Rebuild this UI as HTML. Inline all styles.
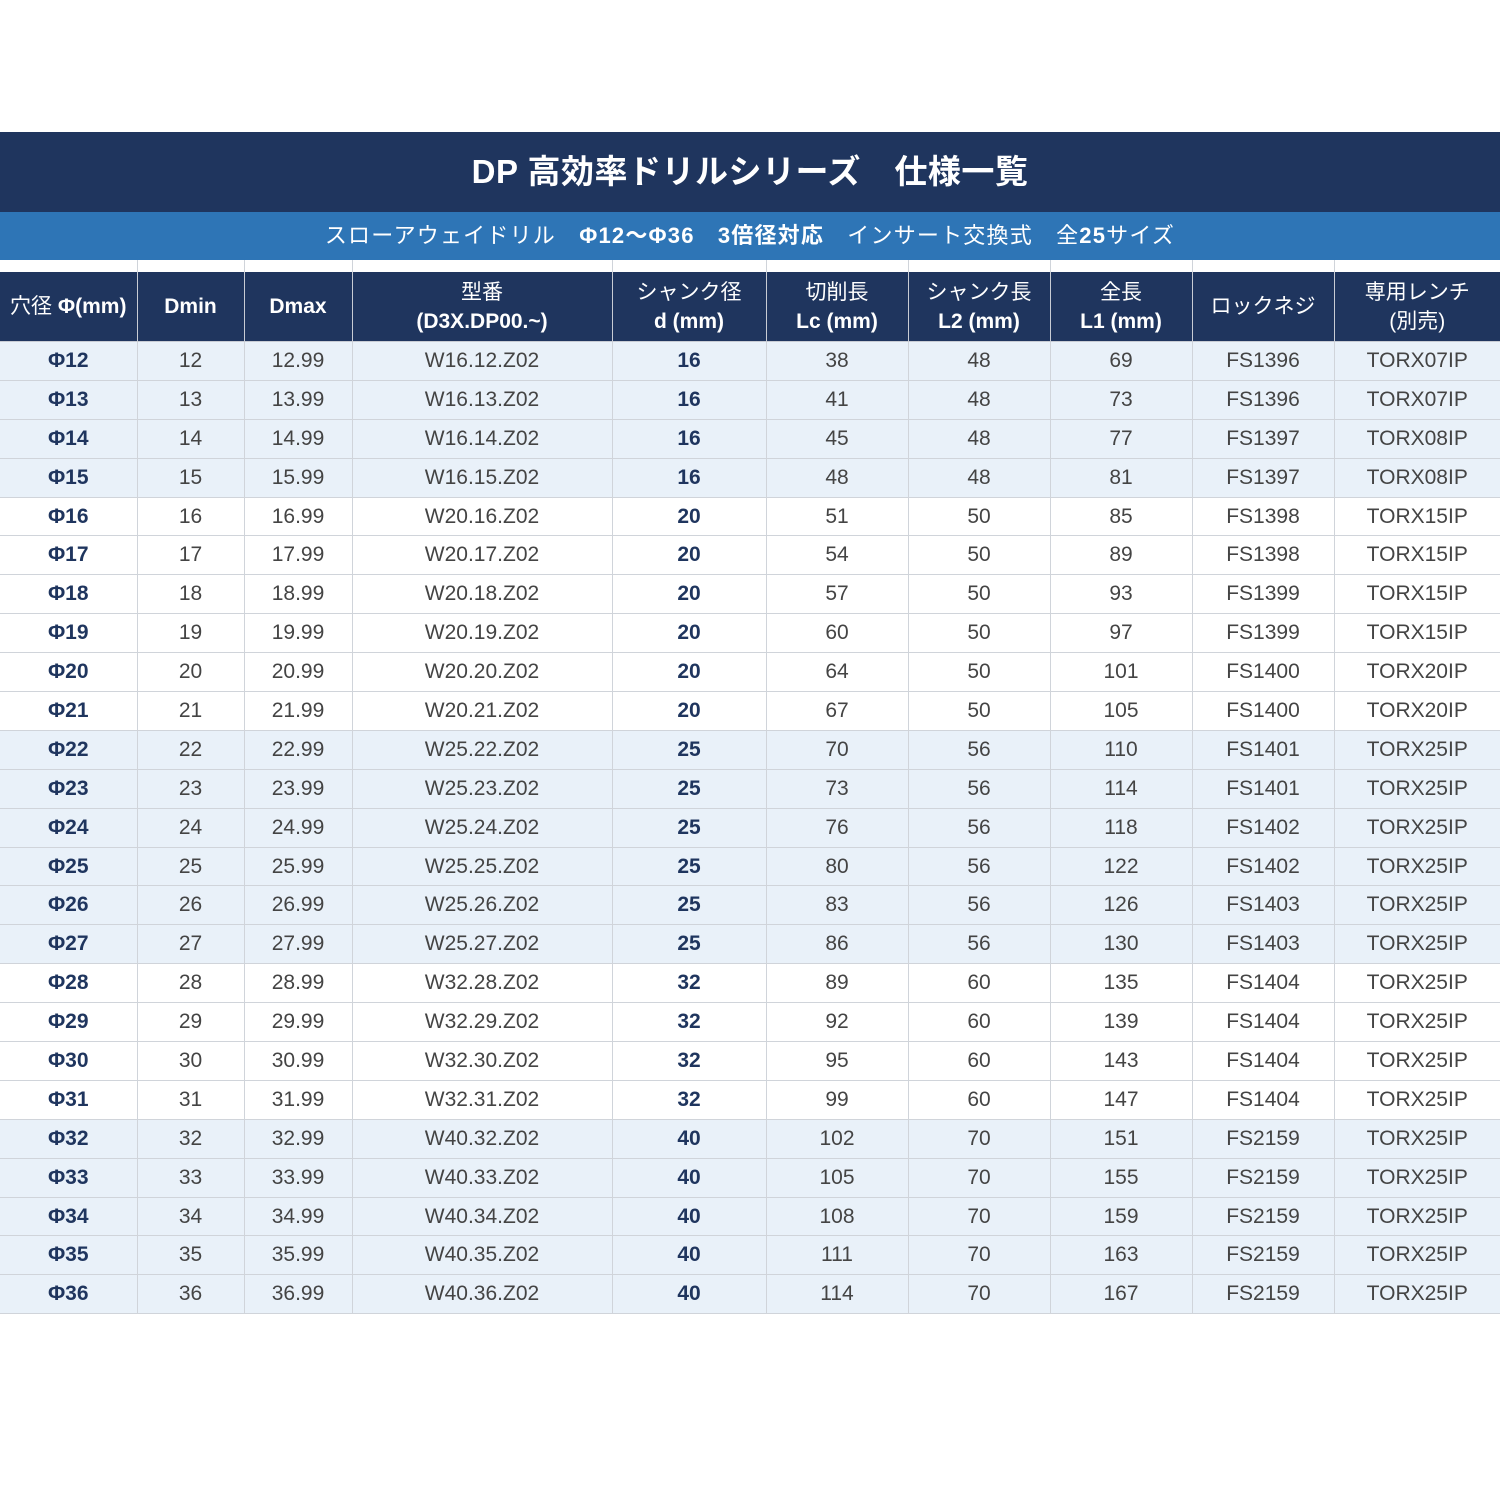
<!DOCTYPE html>
<html><head><meta charset="utf-8"><style>
body{margin:0;width:1500px;height:1500px;background:#fff;font-family:"Liberation Sans","Noto Sans CJK JP",sans-serif;position:relative;overflow:hidden}
.t1{position:absolute;top:132px;left:0;width:1500px;height:80px;background:#1f355e;color:#fff;font-size:33px;font-weight:bold;text-align:center;line-height:80px;letter-spacing:0.5px}
.t2{position:absolute;top:212px;left:0;width:1500px;height:48px;background:#2e75b6;color:#fff;font-size:22px;text-align:center;line-height:48px;letter-spacing:1.2px}
table{position:absolute;top:260px;left:0;width:1500px;border-collapse:collapse;table-layout:fixed}
td{border-left:1px solid #d0d4da;border-bottom:1px solid #d0d4da;text-align:center;color:#444;font-size:21px;padding:0;height:37.9px}
td:first-child{border-left:none}
tr.sp td{height:12px;border-bottom:none}
tr.h td{background:#1f355e;color:#fff;font-weight:bold;height:69px;font-size:21px;line-height:29px;border-color:#c8ccd4}
.h .n{font-weight:normal}
td.b{font-weight:bold;color:#1f355e}
tr.a td{background:#e9f1f9}
</style></head><body>
<div class="t1">DP 高効率ドリルシリーズ　仕様一覧</div>
<div class="t2">スローアウェイドリル　<b>Φ12～Φ36　3倍径対応</b>　インサート交換式　全<b>25</b>サイズ</div>
<table>
<colgroup><col style="width:137px"><col style="width:107px"><col style="width:108px"><col style="width:260px"><col style="width:154px"><col style="width:142px"><col style="width:142px"><col style="width:142px"><col style="width:142px"><col style="width:166px"></colgroup>
<tr class="sp"><td></td><td></td><td></td><td></td><td></td><td></td><td></td><td></td><td></td><td></td></tr>
<tr class="h"><td style="white-space:nowrap"><span class="n">穴径</span> Φ(mm)</td><td>Dmin</td><td>Dmax</td><td><span class="n">型番</span><br>(D3X.DP00.~)</td><td><span class="n">シャンク径</span><br>d (mm)</td><td><span class="n">切削長</span><br>Lc (mm)</td><td><span class="n">シャンク長</span><br>L2 (mm)</td><td><span class="n">全長</span><br>L1 (mm)</td><td><span class="n">ロックネジ</span></td><td><span class="n">専用レンチ<br>(別売)</span></td></tr>
<tr class="a"><td class="b">Φ12</td><td>12</td><td>12.99</td><td>W16.12.Z02</td><td class="b">16</td><td>38</td><td>48</td><td>69</td><td>FS1396</td><td>TORX07IP</td></tr>
<tr class="a"><td class="b">Φ13</td><td>13</td><td>13.99</td><td>W16.13.Z02</td><td class="b">16</td><td>41</td><td>48</td><td>73</td><td>FS1396</td><td>TORX07IP</td></tr>
<tr class="a"><td class="b">Φ14</td><td>14</td><td>14.99</td><td>W16.14.Z02</td><td class="b">16</td><td>45</td><td>48</td><td>77</td><td>FS1397</td><td>TORX08IP</td></tr>
<tr class="a"><td class="b">Φ15</td><td>15</td><td>15.99</td><td>W16.15.Z02</td><td class="b">16</td><td>48</td><td>48</td><td>81</td><td>FS1397</td><td>TORX08IP</td></tr>
<tr><td class="b">Φ16</td><td>16</td><td>16.99</td><td>W20.16.Z02</td><td class="b">20</td><td>51</td><td>50</td><td>85</td><td>FS1398</td><td>TORX15IP</td></tr>
<tr><td class="b">Φ17</td><td>17</td><td>17.99</td><td>W20.17.Z02</td><td class="b">20</td><td>54</td><td>50</td><td>89</td><td>FS1398</td><td>TORX15IP</td></tr>
<tr><td class="b">Φ18</td><td>18</td><td>18.99</td><td>W20.18.Z02</td><td class="b">20</td><td>57</td><td>50</td><td>93</td><td>FS1399</td><td>TORX15IP</td></tr>
<tr><td class="b">Φ19</td><td>19</td><td>19.99</td><td>W20.19.Z02</td><td class="b">20</td><td>60</td><td>50</td><td>97</td><td>FS1399</td><td>TORX15IP</td></tr>
<tr><td class="b">Φ20</td><td>20</td><td>20.99</td><td>W20.20.Z02</td><td class="b">20</td><td>64</td><td>50</td><td>101</td><td>FS1400</td><td>TORX20IP</td></tr>
<tr><td class="b">Φ21</td><td>21</td><td>21.99</td><td>W20.21.Z02</td><td class="b">20</td><td>67</td><td>50</td><td>105</td><td>FS1400</td><td>TORX20IP</td></tr>
<tr class="a"><td class="b">Φ22</td><td>22</td><td>22.99</td><td>W25.22.Z02</td><td class="b">25</td><td>70</td><td>56</td><td>110</td><td>FS1401</td><td>TORX25IP</td></tr>
<tr class="a"><td class="b">Φ23</td><td>23</td><td>23.99</td><td>W25.23.Z02</td><td class="b">25</td><td>73</td><td>56</td><td>114</td><td>FS1401</td><td>TORX25IP</td></tr>
<tr class="a"><td class="b">Φ24</td><td>24</td><td>24.99</td><td>W25.24.Z02</td><td class="b">25</td><td>76</td><td>56</td><td>118</td><td>FS1402</td><td>TORX25IP</td></tr>
<tr class="a"><td class="b">Φ25</td><td>25</td><td>25.99</td><td>W25.25.Z02</td><td class="b">25</td><td>80</td><td>56</td><td>122</td><td>FS1402</td><td>TORX25IP</td></tr>
<tr class="a"><td class="b">Φ26</td><td>26</td><td>26.99</td><td>W25.26.Z02</td><td class="b">25</td><td>83</td><td>56</td><td>126</td><td>FS1403</td><td>TORX25IP</td></tr>
<tr class="a"><td class="b">Φ27</td><td>27</td><td>27.99</td><td>W25.27.Z02</td><td class="b">25</td><td>86</td><td>56</td><td>130</td><td>FS1403</td><td>TORX25IP</td></tr>
<tr><td class="b">Φ28</td><td>28</td><td>28.99</td><td>W32.28.Z02</td><td class="b">32</td><td>89</td><td>60</td><td>135</td><td>FS1404</td><td>TORX25IP</td></tr>
<tr><td class="b">Φ29</td><td>29</td><td>29.99</td><td>W32.29.Z02</td><td class="b">32</td><td>92</td><td>60</td><td>139</td><td>FS1404</td><td>TORX25IP</td></tr>
<tr><td class="b">Φ30</td><td>30</td><td>30.99</td><td>W32.30.Z02</td><td class="b">32</td><td>95</td><td>60</td><td>143</td><td>FS1404</td><td>TORX25IP</td></tr>
<tr><td class="b">Φ31</td><td>31</td><td>31.99</td><td>W32.31.Z02</td><td class="b">32</td><td>99</td><td>60</td><td>147</td><td>FS1404</td><td>TORX25IP</td></tr>
<tr class="a"><td class="b">Φ32</td><td>32</td><td>32.99</td><td>W40.32.Z02</td><td class="b">40</td><td>102</td><td>70</td><td>151</td><td>FS2159</td><td>TORX25IP</td></tr>
<tr class="a"><td class="b">Φ33</td><td>33</td><td>33.99</td><td>W40.33.Z02</td><td class="b">40</td><td>105</td><td>70</td><td>155</td><td>FS2159</td><td>TORX25IP</td></tr>
<tr class="a"><td class="b">Φ34</td><td>34</td><td>34.99</td><td>W40.34.Z02</td><td class="b">40</td><td>108</td><td>70</td><td>159</td><td>FS2159</td><td>TORX25IP</td></tr>
<tr class="a"><td class="b">Φ35</td><td>35</td><td>35.99</td><td>W40.35.Z02</td><td class="b">40</td><td>111</td><td>70</td><td>163</td><td>FS2159</td><td>TORX25IP</td></tr>
<tr class="a"><td class="b">Φ36</td><td>36</td><td>36.99</td><td>W40.36.Z02</td><td class="b">40</td><td>114</td><td>70</td><td>167</td><td>FS2159</td><td>TORX25IP</td></tr>
</table>
</body></html>
